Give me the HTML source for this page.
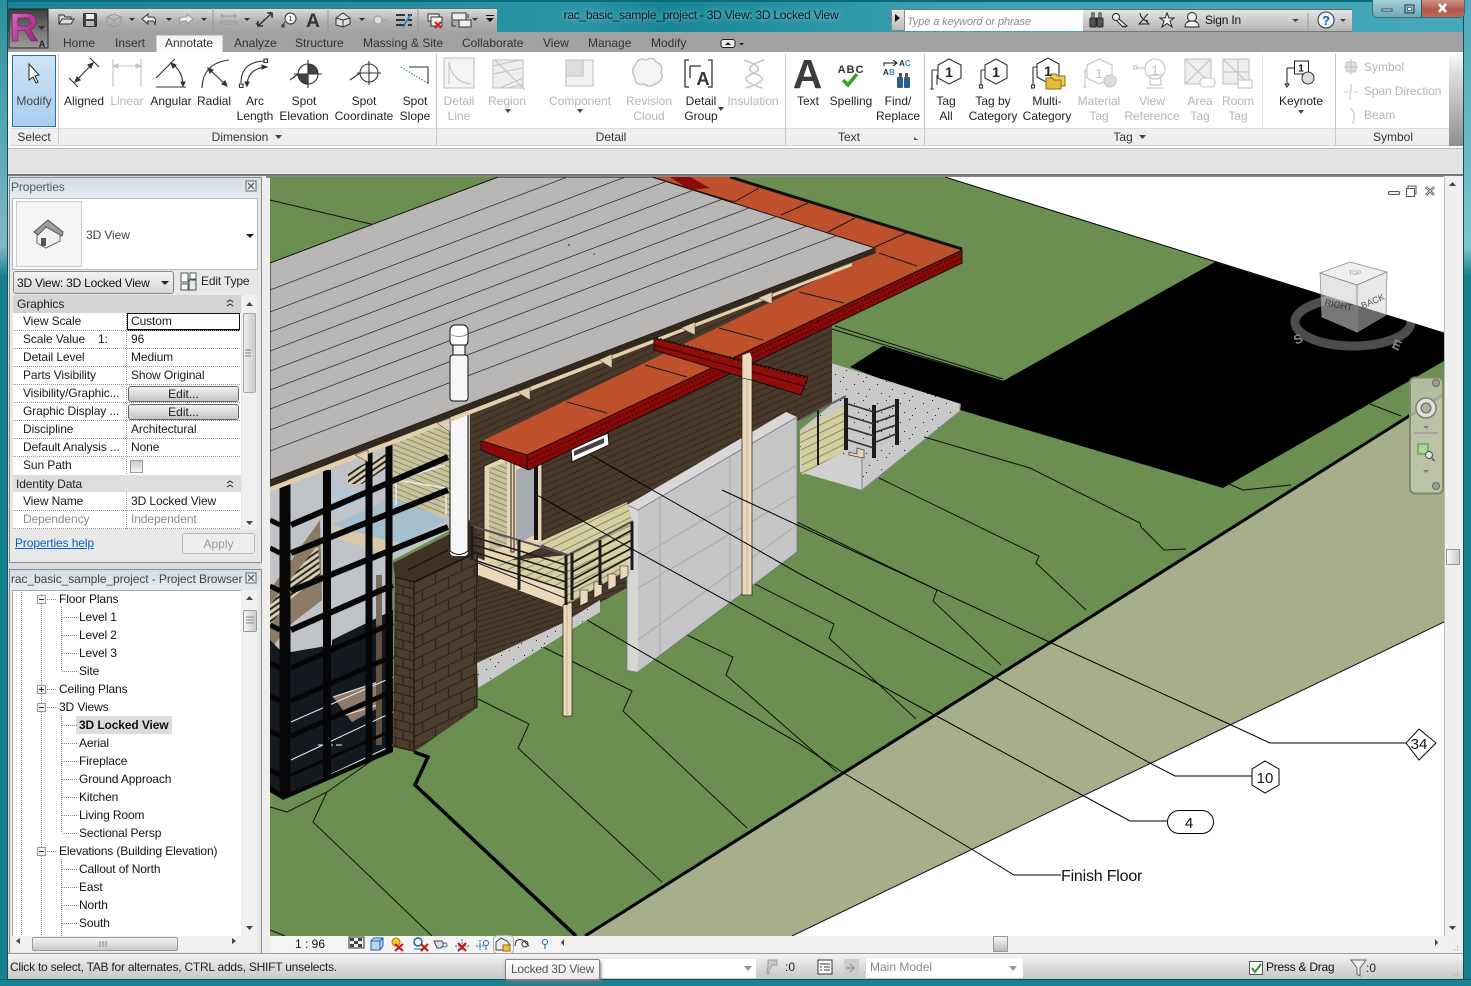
<!DOCTYPE html>
<html><head><meta charset="utf-8"><title>rac_basic_sample_project - 3D View: 3D Locked View</title>
<style>
html,body{margin:0;padding:0;width:1471px;height:986px;overflow:hidden;background:#1f8796}
*{box-sizing:border-box}
div,span,a{position:absolute;font:12px/15px "Liberation Sans",sans-serif;color:#222;white-space:nowrap}
svg{position:absolute;left:0;top:0;overflow:hidden}
svg text{font-family:"Liberation Sans",sans-serif}
.c{transform:translateX(-50%);text-align:center}
.g{color:#b5b5b5}
.tab{top:36px;color:#333}
.lb{top:130px;color:#333}
.row{left:23px;color:#1a1a1a;letter-spacing:-.1px}
.val{left:131px;color:#1a1a1a;letter-spacing:-.1px}
.tr{color:#111;letter-spacing:-.12px}
.edit{left:128px;width:111px;height:16px;background:linear-gradient(#f2f2f2,#c4c4c4);border:1px solid #666;border-radius:3px;text-align:center;line-height:14px}
</style></head><body>

<!-- window frame -->
<div style="left:0;top:0;width:1471px;height:33px;background:linear-gradient(90deg,#1a8596 0,#2a93a6 40%,#178494 45%,#3ca3b5 65%,#46a8ba 100%);border-top:2px solid #0a6a78"></div>
<div style="left:0;top:0;width:8px;height:986px;background:linear-gradient(#2a8f9f 0,#7fb9c4 25%,#17808e 28%,#17808e 100%);border-right:1px solid #0b4f58"></div>
<div style="left:1463px;top:0;width:8px;height:986px;background:linear-gradient(#4fa9ba 0,#7fc3ce 25%,#17808e 28%,#17808e 100%);border-left:1px solid #0b4f58"></div>
<div style="left:0;top:979px;width:1471px;height:7px;background:#1a8292;border-top:1px solid #0b4f58"></div>

<!-- QAT -->
<div style="left:48px;top:8px;width:449px;height:24px;background:linear-gradient(#dcdcdc,#b0b0b0 55%,#a4a4a4);border-top:1px solid #666"></div>
<!-- title -->
<div class="c" style="left:701px;top:8px;color:#101a20;letter-spacing:-.26px;text-shadow:0 0 6px #a8dde4">rac_basic_sample_project - 3D View: 3D Locked View</div>
<!-- search -->
<div style="left:891px;top:9px;width:192px;height:22px;background:#fff;border-top:1px solid #777"></div>
<div style="left:891px;top:9px;width:14px;height:22px;background:linear-gradient(#e8e8e8,#bbb);border:1px solid #888"></div>
<div style="left:907px;top:15px;font-style:italic;font-size:11px;letter-spacing:-.1px;color:#8a8a8a">Type a keyword or phrase</div>
<div style="left:1083px;top:9px;width:269px;height:23px;background:linear-gradient(#e4e4e4,#b4b4b4);border-top:1px solid #666;border-bottom:1px solid #777"></div>
<div style="left:1205px;top:13px;color:#111;letter-spacing:-.2px">Sign In</div>
<!-- win buttons -->
<div style="left:1372px;top:0;width:93px;height:18px;background:linear-gradient(#a6ced6,#6aa9b6);border:1px solid #3a6f7a;border-top:0;border-radius:0 0 5px 5px"></div>
<div style="left:1422px;top:0;width:42px;height:17px;background:linear-gradient(#cf9488,#b25a4c 55%,#bc6a5c);border-radius:0 0 5px 0"></div>

<!-- tabs -->
<div style="left:8px;top:32px;width:1455px;height:20px;background:#a1a1a1"></div>
<div style="left:156px;top:35px;width:67px;height:18px;background:linear-gradient(#f2f2f2,#fff);border:1px solid #d0d0d0;border-bottom:0"></div>
<div class="tab" style="left:63px">Home</div>
<div class="tab" style="left:115px">Insert</div>
<div class="tab" style="left:165px">Annotate</div>
<div class="tab" style="left:234px">Analyze</div>
<div class="tab" style="left:295px">Structure</div>
<div class="tab" style="left:363px">Massing &amp; Site</div>
<div class="tab" style="left:462px">Collaborate</div>
<div class="tab" style="left:543px">View</div>
<div class="tab" style="left:588px">Manage</div>
<div class="tab" style="left:651px">Modify</div>

<!-- ribbon -->
<div style="left:8px;top:52px;width:1455px;height:97px;background:#fff;border-bottom:1px solid #bbb"></div>
<div style="left:10px;top:128px;width:1439px;height:18px;background:#efefef;border-top:1px solid #ddd;border-bottom:1px solid #ccc"></div>
<div style="left:1449px;top:52px;width:14px;height:94px;background:linear-gradient(#fff,#e0e0e0 20%,#8f8f8f)"></div>
<div style="left:8px;top:149px;width:1455px;height:27px;background:#e4e4e4;border-bottom:2px solid #777"></div>
<div style="left:12px;top:55px;width:44px;height:72px;background:linear-gradient(#cfe3f6,#a9cdee);border:1px solid #2a6cb4"></div>

<!-- left column -->
<div style="left:8px;top:176px;width:262px;height:778px;background:#dcdcdc"></div>
<div style="left:9px;top:177px;width:253px;height:386px;background:#e8e8e8;border:1px solid #8d8d8d"></div>
<div style="left:10px;top:178px;width:251px;height:19px;background:linear-gradient(#d2dde6,#e4ebf0)"></div>
<div style="left:11px;top:180px;color:#5a5a5a;letter-spacing:-.1px">Properties</div>
<div style="left:12px;top:198px;width:246px;height:72px;background:#fff;border:1px solid #bbb"></div>
<div style="left:16px;top:201px;width:66px;height:66px;background:#f5f5f5;border:1px solid #ccc"></div>
<div style="left:86px;top:228px;color:#444;letter-spacing:-.1px">3D View</div>
<div style="left:13px;top:271px;width:161px;height:23px;background:linear-gradient(#f4f4f4,#d8d8d8);border:1px solid #888;border-radius:3px"></div>
<div style="left:17px;top:276px;color:#111;letter-spacing:-.22px">3D View: 3D Locked View</div>
<div style="left:201px;top:274px;color:#222;letter-spacing:-.15px">Edit Type</div>

<div style="left:13px;top:295px;width:228px;height:234px;background:#fff"></div>
<div style="left:13px;top:295px;width:228px;height:18px;background:#d4d4d4"></div>
<div style="left:13px;top:475px;width:228px;height:17px;background:#dedede"></div>
<div style="left:17px;top:297px;letter-spacing:-.1px">Graphics</div>
<div style="left:16px;top:477px;letter-spacing:-.1px">Identity Data</div>
<div class="row" style="top:314px">View Scale</div>
<div class="row" style="top:332px">Scale Value &nbsp;&nbsp;&nbsp;1:</div>
<div class="row" style="top:350px">Detail Level</div>
<div class="row" style="top:368px">Parts Visibility</div>
<div class="row" style="top:386px">Visibility/Graphic...</div>
<div class="row" style="top:404px">Graphic Display ...</div>
<div class="row" style="top:422px">Discipline</div>
<div class="row" style="top:440px">Default Analysis ...</div>
<div class="row" style="top:458px">Sun Path</div>
<div class="row" style="top:494px">View Name</div>
<div class="row" style="top:512px;color:#8c8c8c">Dependency</div>
<div style="left:127px;top:313px;width:113px;height:18px;background:#fff;border:1px solid #111;border-width:1px 1px 2px 1px"></div>
<div class="val" style="top:314px">Custom</div>
<div class="val" style="top:332px">96</div>
<div class="val" style="top:350px">Medium</div>
<div class="val" style="top:368px">Show Original</div>
<div class="edit" style="top:386px">Edit...</div>
<div class="edit" style="top:404px">Edit...</div>
<div class="val" style="top:422px">Architectural</div>
<div class="val" style="top:440px">None</div>
<div style="left:130px;top:460px;width:13px;height:13px;background:linear-gradient(#ccc,#f4f4f4);border:1px solid #999"></div>
<div class="val" style="top:494px">3D Locked View</div>
<div class="val" style="top:512px;color:#8c8c8c">Independent</div>
<div style="left:242px;top:295px;width:15px;height:234px;background:#f0f0f0"></div>
<div style="left:243px;top:313px;width:13px;height:80px;background:linear-gradient(90deg,#eee,#ccc);border:1px solid #aaa;border-radius:2px"></div>
<a style="left:15px;top:536px;color:#0a5fc8;text-decoration:underline;letter-spacing:-.12px">Properties help</a>
<div style="left:182px;top:533px;width:73px;height:21px;background:#eee;border:1px solid #bbb;border-radius:3px;text-align:center;line-height:21px;color:#999">Apply</div>

<!-- browser -->
<div style="left:9px;top:569px;width:253px;height:385px;background:#e8e8e8;border:1px solid #8d8d8d"></div>
<div style="left:10px;top:570px;width:251px;height:19px;background:linear-gradient(#d2dde6,#e4ebf0)"></div>
<div style="left:11px;top:572px;color:#444;letter-spacing:-.08px">rac_basic_sample_project - Project Browser</div>
<div style="left:12px;top:590px;width:229px;height:346px;background:#fff;border-left:1px solid #aaa;border-top:1px solid #aaa"></div>
<div style="left:241px;top:590px;width:17px;height:346px;background:#f0f0f0"></div>
<div style="left:243px;top:610px;width:14px;height:22px;background:linear-gradient(90deg,#f4f4f4,#ccc);border:1px solid #999;border-radius:2px"></div>
<div style="left:12px;top:936px;width:246px;height:16px;background:#f0f0f0"></div>
<div style="left:32px;top:937px;width:146px;height:14px;background:linear-gradient(#f4f4f4,#c8c8c8);border:1px solid #999;border-radius:2px"></div>
<div style="left:76px;top:716px;width:96px;height:18px;background:#dcdcdc"></div>
<div class="tr" style="left:59px;top:592px">Floor Plans</div>
<div class="tr" style="left:79px;top:610px">Level 1</div>
<div class="tr" style="left:79px;top:628px">Level 2</div>
<div class="tr" style="left:79px;top:646px">Level 3</div>
<div class="tr" style="left:79px;top:664px">Site</div>
<div class="tr" style="left:59px;top:682px">Ceiling Plans</div>
<div class="tr" style="left:59px;top:700px">3D Views</div>
<div class="tr" style="left:79px;top:718px;font-weight:bold">3D Locked View</div>
<div class="tr" style="left:79px;top:736px">Aerial</div>
<div class="tr" style="left:79px;top:754px">Fireplace</div>
<div class="tr" style="left:79px;top:772px">Ground Approach</div>
<div class="tr" style="left:79px;top:790px">Kitchen</div>
<div class="tr" style="left:79px;top:808px">Living Room</div>
<div class="tr" style="left:79px;top:826px">Sectional Persp</div>
<div class="tr" style="left:59px;top:844px">Elevations (Building Elevation)</div>
<div class="tr" style="left:79px;top:862px">Callout of North</div>
<div class="tr" style="left:79px;top:880px">East</div>
<div class="tr" style="left:79px;top:898px">North</div>
<div class="tr" style="left:79px;top:916px">South</div>

<!-- viewport scene -->
<div style="left:262px;top:176px;width:1201px;height:778px;background:#eee"></div>
<div style="left:266px;top:176px;width:1178px;height:2px;background:#888"></div>
<svg style="left:270px;top:177px" width="1174" height="759" viewBox="270 177 1174 759">
<defs>
<pattern id="sid" width="7" height="6" patternUnits="userSpaceOnUse" patternTransform="rotate(-24)"><rect width="7" height="6" fill="#48392a"/><rect y="5" width="7" height="1" fill="#33291d"/></pattern>
<pattern id="sid2" width="7" height="5" patternUnits="userSpaceOnUse" patternTransform="rotate(-17)"><rect width="7" height="5" fill="#48392a"/><rect y="4" width="7" height="1" fill="#33291d"/></pattern>
<pattern id="deck" width="7" height="7" patternUnits="userSpaceOnUse" patternTransform="rotate(-26)"><rect width="7" height="7" fill="#d4d0a2"/><rect y="6" width="7" height="1" fill="#8f8b68"/></pattern>
<pattern id="tanw" width="5" height="5" patternUnits="userSpaceOnUse" patternTransform="rotate(22)"><rect width="5" height="5" fill="#c9c39c"/><rect y="4" width="5" height="1" fill="#8d8a6c"/></pattern>
<pattern id="dots" width="23" height="19" patternUnits="userSpaceOnUse"><rect width="23" height="19" fill="#c9c9c9"/><rect x="3" y="4" width="1" height="1" fill="#222"/><rect x="12" y="1" width="1" height="1" fill="#222"/><rect x="18" y="9" width="1" height="1" fill="#222"/><rect x="7" y="13" width="1" height="1" fill="#222"/><rect x="15" y="16" width="1" height="1" fill="#222"/></pattern>
<pattern id="brR" width="26" height="22" patternUnits="userSpaceOnUse" patternTransform="matrix(1 -.48 0 1 0 0)"><rect width="26" height="22" fill="#4b3c2d"/><path d="M0 .5H26M0 11.5H26M6.5 0V11M19.5 11V22" stroke="#2a2016" fill="none"/></pattern>
<pattern id="brL" width="14" height="18" patternUnits="userSpaceOnUse" patternTransform="matrix(1 .27 0 1 0 0)"><rect width="14" height="18" fill="#4b3c2d"/><path d="M0 .5H14M0 9.5H14M4 0V9M11 9V18" stroke="#2a2016" fill="none"/></pattern>
<pattern id="hat" width="5" height="5" patternUnits="userSpaceOnUse" patternTransform="rotate(-35)"><rect width="5" height="5" fill="#d8cdb0"/><rect y="3" width="5" height="2" fill="#2c2a26"/></pattern>
<clipPath id="rf"><polygon points="270,263 498,177 652,177 875,248 270,480"/></clipPath>
</defs>
<rect x="270" y="177" width="1174" height="759" fill="#fff"/>
<polygon points="270,177 945,177 1444,333 1444,394 585,936 270,936" fill="#6a8f51"/>
<polygon points="585,936 1444,394 1444,622 792,936" fill="#a6ae8c"/>
<polygon points="883,346 1003,381 1215,262 1240,270 1444,333 1444,361 1223,488 960,410 850,367" fill="#000"/>
<path d="M792,936L1444,622" stroke="#111" fill="none"/>
<path d="M945,177L1444,333" stroke="#000" fill="none"/>
<polygon points="831,363 961,404 960,411 862,490 800,472 800,430 831,405" fill="url(#dots)"/>
<polygon points="800,450 862,458 862,490 800,472" fill="#d0d0d0"/>
<path d="M862,458V490L960,411V404" stroke="#888" fill="none"/>
<!-- contours -->
<g fill="none" stroke="#111" stroke-width="1">
<path d="M270,200L375,225"/>
<path d="M832,329L1003,381M835,326L1003,379"/>
<path d="M924,437L1030,468L1140,523L1141,527L1164,550L1186,549"/>
<path d="M879,478L1039,556L1036,563L1086,610"/>
<path d="M1229,484L1243,490L1291,485"/>
<path d="M1370,404L1401,416"/>
<path d="M797,522L937,590L933,601L1001,665"/>
<path d="M753,583L834,624L829,638L916,719"/>
<path d="M478,699L529,724L518,748L662,882"/>
<path d="M543,647L632,691L623,711L747,828"/>
<path d="M687,635L733,657L726,675L837,772"/>
<path d="M270,807L287,812L327,792L387,750"/>
<path d="M327,792L313,822L432,936"/>
<path d="M270,930L285,936"/>
</g>
<path d="M414,752L428,757L415,785L576,936" stroke="#000" stroke-width="3.5" fill="none"/>
<path d="M585,936L1444,394" stroke="#000" stroke-width="3" fill="none"/>

<!-- wall -->
<polygon points="468,400 832,240 832,403 600,525 477,590 468,600" fill="url(#sid)"/>
<!-- glass wall back -->
<polygon points="270,480 470,410 470,520 393,560 393,747 283,795 270,787" fill="#c0c4c9"/>
<polygon points="393,440 450,420 450,519 393,500" fill="url(#tanw)"/>
<polygon points="332,525 393,498 448,520 403,543 373,537" fill="#a6bfcc"/>
<polygon points="332,482 373,497 332,515" fill="#b4c9d5"/>
<polygon points="332,525 403,545 380,552 335,538" fill="#d8c9a8"/>
<path d="M396,505V480L446,488V515M396,480L445,465" stroke="#e8e8e8" stroke-width="1.5" fill="none"/>
<polygon points="270,590 320,520 322,600 290,625 270,650" fill="#8c7a64"/>
<polygon points="270,605 318,545 320,575 290,600 270,625" fill="url(#hat)"/>
<polygon points="348,472 392,450 392,464 362,484 348,484" fill="url(#hat)"/>
<polygon points="270,640 280,650 291,652 332,645 332,640 393,610 393,747 283,795 270,787" fill="#14181f"/>
<polygon points="333,697 380,682 378,708 352,722" fill="#8c7a6c"/>
<path d="M333,697L378,682M345,715L378,705" stroke="#eee" stroke-width="1" fill="none"/>
<path d="M379,625V745" stroke="#5f5040" stroke-width="6"/>
<path d="M379,575V625" stroke="#7b6b58" stroke-width="6"/>
<path d="M291,793L393,745M291,760L393,712M291,722L393,677" stroke="#e8e8e8" stroke-width="1" fill="none"/>
<path d="M318,745H345" stroke="#eee" stroke-dasharray="6 3" fill="none"/>
<!-- frame -->
<g stroke="#060606" fill="none">
<path d="M285,480V796" stroke-width="11"/>
<path d="M327,470V778" stroke-width="8"/>
<path d="M369,450V760" stroke-width="7"/>
<path d="M389,440V750" stroke-width="7"/>
<path d="M291,525L448,457M291,553L448,490M291,591L448,527M291,630L393,585" stroke-width="6"/>
<path d="M291,668L393,623M291,701L393,656M291,736L393,691" stroke-width="5"/>
<path d="M291,775L393,730" stroke-width="3"/>
<path d="M270,520L280,525M270,548L280,553M270,586L280,591M270,625L280,630M270,663L280,668M270,696L280,701M270,731L280,736M270,770L280,775" stroke-width="5"/>
</g>
<polygon points="270,785 283,795 393,747 393,752 283,800 270,792" fill="#060606"/>
<!-- brick pier -->
<polygon points="393,563 448,535 477,520 477,552 414,582 395,577" fill="#3f3124"/>
<path d="M408,570L448,550" stroke="#111"/>
<polygon points="395,577 414,582 414,752 393,747" fill="url(#brL)"/>
<polygon points="414,582 477,552 477,708 414,752" fill="url(#brR)"/>
<path d="M395,577L414,582L477,552M414,582V752M477,552V708" stroke="#111" fill="none"/>
<!-- lower wall + strip -->
<polygon points="477,583 600,525 632,520 632,585 563,623 477,663" fill="url(#sid2)"/>
<polygon points="477,663 563,623 600,600 600,612 478,688" fill="url(#dots)"/>
<!-- pipe lower -->
<rect x="450" y="400" width="18" height="156" fill="#f6f6f6" rx="4"/>
<path d="M450,400V551Q459,558 468,551V400" stroke="#111" fill="none"/>
<!-- door -->
<polygon points="484,466 542,440 542,548 484,572" fill="#e8d4b0" stroke="#222"/>
<polygon points="489,468 507,462 507,545 489,552" fill="url(#tanw)"/>
<rect x="511" y="462" width="3" height="90" fill="#e8d4b0" stroke="#222"/>
<polygon points="516,470 534,462 534,535 516,545" fill="#a7abb0"/>
<rect x="534" y="460" width="4" height="80" fill="#111"/>
<!-- window -->
<polygon points="571,449 608,433 609,445 572,462" fill="#fff" stroke="#111"/>
<polygon points="574,451 604,438 604,443 574,456" fill="#444"/>
<!-- concrete wall -->
<polygon points="638,510 797,417 797,552 638,672" fill="#c6c6c8"/>
<polygon points="627,505 638,510 638,672 627,670" fill="#d6d6d6"/>
<polygon points="627,505 786,412 797,417 638,510" fill="#d8d8d8"/>
<path d="M627,505L638,510L797,417V552L638,672H627V505" stroke="#777" fill="none" stroke-width=".8"/>
<path d="M660,497V655M730,456V603M638,558L797,465M638,588L797,495M638,640L797,525" stroke="#a8a8aa" fill="none"/>
<!-- balcony deck -->
<polygon points="537,543 627,502 632,520 570,555" fill="url(#deck)"/>
<polygon points="478,563 568,555 632,523 627,570 563,607 478,575" fill="url(#deck)"/>
<polygon points="478,558 568,592 563,607 478,575" fill="#ecd9bc"/>
<path d="M478,563L565,598" stroke="#222" fill="none"/>
<g fill="#ecd9bc" stroke="#222" stroke-width=".6"><path d="M580,590h8v12l-8,4z"/><path d="M594,582h8v12l-8,4z"/><path d="M608,574h8v12l-8,4z"/><path d="M620,566h8v10l-8,4z"/></g>
<polygon points="563,605 572,602 572,716 563,716" fill="#ecd9bc" stroke="#222" stroke-width=".7"/>
<path d="M567,605V716" stroke="#c8b28e" fill="none"/>
<!-- rails -->
<g fill="none" stroke="#1c1c1c">
<path d="M472,526L568,555L633,521" stroke="#555" stroke-width="2"/>
<path d="M472,526V560M519,540V590M566,555V605M572,553V600M600,540V585M632,522V570" stroke-width="3"/>
<path d="M474,537L566,565M474,545L566,573M474,552L566,582M474,560L566,590M572,563L632,530M572,572L632,540M572,580L632,548M572,589L632,556" stroke-width="1.600"/>
</g>
<!-- gray post -->
<rect x="742" y="353" width="10" height="242" fill="#ecd9bc" stroke="#222" stroke-width=".7"/>
<path d="M747,353V595" stroke="#c8b28e"/>
<!-- soffit & orange -->
<polygon points="482,441 852,263 962,249 527,455" fill="#be502b"/>
<polygon points="652,177 730,177 962,249 875,248" fill="#be502b"/>
<polygon points="875,248 962,249 852,263" fill="#be502b"/>
<g stroke="#1a1a1a" fill="none"><path d="M734,202L759,188M781,215L808,203M828,232L855,218M875,247L906,233M879,253L917,266M799,292L844,303M719,328L763,340M645,365L687,377M567,402L607,413"/><path d="M652,177L734,202"/></g>
<path d="M730,177L962,249" stroke="#111" stroke-width="3" fill="none"/>
<polygon points="670,177 690,177 710,188 690,190" fill="#8b0a0a"/>
<polygon points="962,250 962,263 529,470 482,450 481,441 527,455" fill="#8c0808"/>
<path d="M960,254L528,460M962,258L529,465" stroke="#111" stroke-dasharray="2 2" fill="none"/>
<path d="M482,441L527,455L962,250V263L529,470L481,450V441M527,455V470" stroke="#111" fill="none"/>
<!-- roof -->
<polygon points="270,263 498,177 652,177 875,248 270,480" fill="#b9b7b5" stroke="#111"/>
<g clip-path="url(#rf)" stroke="#333" stroke-width=".8" fill="none"><path d="M270,290L670,138M270,312L770,122M270,332L770,142M270,351L870,123M270,371L970,105M270,390L870,162M270,409L970,143M270,430L970,164M270,451L970,185"/></g>
<polygon points="270,480 875,248 876,253 270,487" fill="#332a1f"/>
<polygon points="270,487 852,263 852,266 270,492" fill="#e3cfae"/>
<g fill="#e3cfae" stroke="#333" stroke-width=".5"><path d="M758,298L772,292V304Z"/><path d="M681,328L695,322V335Z"/><path d="M599,360L612,354V368Z"/><path d="M517,392L530,387V400Z"/><path d="M437,423L450,418V432Z"/><path d="M355,455L368,450V462Z"/></g>
<circle cx="569" cy="245" r=".7" fill="#111"/><circle cx="594" cy="254" r=".7" fill="#111"/>
<!-- pipe upper -->
<rect x="450" y="325" width="18" height="21" rx="5" fill="#fff" stroke="#111"/>
<path d="M450,334Q459,339 468,334" stroke="#888" fill="none"/>
<rect x="453" y="345" width="12" height="12" fill="#f4f4f4" stroke="#111"/>
<rect x="450" y="355" width="18" height="46" rx="3" fill="#f6f6f6" stroke="#111"/>
<!-- beam -->
<polygon points="654,338 808,377 801,395 654,350" fill="#930c0c" stroke="#111"/>
<path d="M654,345L804,386" stroke="#4a0505" stroke-width="1.500"/>
<path d="M656,338L806,378" stroke="#111" stroke-dasharray="2 2" stroke-width="2"/>
<polygon points="742,355 750,352 752,357 752,380 742,378" fill="#ecd9bc" stroke="#222" stroke-width=".6"/>
<!-- pad railing -->
<polygon points="800,432 845,405 846,450 802,475" fill="url(#deck)"/>
<g fill="none" stroke="#1c1c1c">
<path d="M800,420L846,396" stroke="#666" stroke-width="2"/>
<path d="M846,398V450M874,405V458M897,399V445" stroke-width="4"/>
<path d="M848,404L874,412M848,416L874,424M848,428L874,436M848,440L874,448M876,412L896,405M876,422L896,415M876,432L896,425M876,442L896,434" stroke-width="1.700" stroke="#333"/>
<path d="M818,410V465" stroke-width="2"/>
</g>
<path d="M849,452l8,2v-6l7,2v8l-15,-3z" fill="#e5d2b0" stroke="#222" stroke-width=".6"/>
<!-- leaders -->
<g fill="none" stroke="#000">
<path d="M722,490L1045,640L1229,724L1270,743H1406"/>
<path d="M591,455L670,500L800,574L989,674L1148,762L1175,776H1252"/>
<path d="M537,495L632,549L800,641L931,713L1082,795L1130,821H1167"/>
<path d="M587,620L800,744L842,772L968,847L1014,875H1061"/>
</g>
<polygon points="1419,729 1436,743 1419,760 1406,743" fill="#fff" stroke="#000"/>
<text x="1419" y="749" font-size="15" text-anchor="middle" fill="#111">34</text>
<polygon points="1265,761 1279,769 1279,785 1265,793 1252,785 1252,769" fill="#fff" stroke="#000"/>
<text x="1265" y="783" font-size="15" text-anchor="middle" fill="#111">10</text>
<rect x="1167.500" y="810.500" width="46" height="23" rx="11.500" fill="#fff" stroke="#000"/>
<text x="1189" y="828" font-size="15" text-anchor="middle" fill="#111">4</text>
<text x="1061" y="881" font-size="16" fill="#111" letter-spacing="-.2">Finish Floor</text>
<!-- view controls -->
<rect x="1388.500" y="191.500" width="11" height="3" rx="1" fill="#eee" stroke="#555"/>
<rect x="1406.500" y="188.500" width="8" height="8" fill="#fff" stroke="#555"/>
<path d="M1408,188V186H1416V194H1414" stroke="#555" fill="none"/>
<path d="M1426,187L1434,195M1434,187L1426,195" stroke="#555" stroke-width="2.500"/>
<path d="M1426,187L1434,195M1434,187L1426,195" stroke="#eee" stroke-width=".8"/>
<!-- viewcube -->
<ellipse cx="1353" cy="322" rx="58" ry="24" fill="none" stroke="#fff" stroke-opacity=".3" stroke-width="9"/>
<polygon points="1320,273 1350,262 1387,272 1357,285" fill="#eee" fill-opacity=".95" stroke="#888" stroke-width=".7"/>
<polygon points="1320,273 1357,285 1357,332 1322,317" fill="#d1d1d1" fill-opacity=".57" stroke="#888" stroke-width=".7"/>
<polygon points="1357,285 1387,272 1386,315 1357,332" fill="#d1d1d1" fill-opacity=".5" stroke="#888" stroke-width=".7"/>
<text x="1338" y="308" font-size="9" fill="#333" transform="rotate(12 1338 308)" text-anchor="middle">RIGHT</text>
<text x="1374" y="304" font-size="9" fill="#555" transform="rotate(-24 1374 304)" text-anchor="middle">BACK</text>
<text x="1355" y="275" font-size="6" fill="#999" text-anchor="middle">TOP</text>
<text x="1300" y="343" font-size="13" font-weight="bold" fill="#888" transform="rotate(-25 1300 343)" text-anchor="middle">S</text>
<text x="1395" y="349" font-size="13" font-weight="bold" fill="#888" transform="rotate(25 1395 349)" text-anchor="middle">E</text>
<!-- nav bar -->
<rect x="1410" y="377.500" width="33" height="116" rx="5" fill="#bec5aa" fill-opacity=".85" stroke="#7e8a6a" stroke-width="2"/>
<circle cx="1426" cy="408" r="10" fill="#dfe3d4" stroke="#7e7e7e" stroke-width="1.500"/>
<circle cx="1426" cy="408" r="5" fill="#aab09c" stroke="#666"/>
<path d="M1414,433H1438" stroke="#8a9078"/>
<rect x="1418" y="444" width="10" height="10" fill="#b3d39d" stroke="#4e8a3e"/>
<circle cx="1429" cy="455" r="3.500" fill="#e2e2e2" stroke="#555"/><path d="M1431.500,458l3,3" stroke="#555" stroke-width="1.500"/>
<path d="M1423,426h6l-3,3zM1423,470h6l-3,3z" fill="#7a7a7a"/>
<circle cx="1436" cy="383" r="3.500" fill="#9aa08a" stroke="#666"/><circle cx="1436" cy="486" r="3.500" fill="#9aa08a" stroke="#666"/>
</svg>

<!-- scrollbars -->
<div style="left:1444px;top:177px;width:19px;height:777px;background:#efefef;border-left:1px solid #bbb"></div>
<div style="left:1446px;top:549px;width:14px;height:16px;background:linear-gradient(90deg,#f8f8f8,#ccc);border:1px solid #999"></div>
<div style="left:270px;top:936px;width:1175px;height:17px;background:#f0f0f0"></div>
<div style="left:270px;top:936px;width:290px;height:17px;background:#f4f4f4"></div>
<div style="left:993px;top:936px;width:15px;height:16px;background:linear-gradient(#f4f4f4,#bbb);border:1px solid #999"></div>
<div style="left:295px;top:937px;color:#111">1 : 96</div>

<!-- status -->
<div style="left:8px;top:953px;width:1455px;height:26px;background:linear-gradient(#f4f4f4,#dcdcdc 50%,#c8c8c8);border-top:1px solid #999"></div>
<div style="left:10px;top:960px;color:#222;letter-spacing:-.23px">Click to select, TAB for alternates, CTRL adds, SHIFT unselects.</div>
<div style="left:596px;top:959px;width:160px;height:19px;background:#fff"></div>
<div style="left:505px;top:959px;width:95px;height:21px;background:linear-gradient(#fff,#e8e8e8);border:1px solid #888;border-radius:2px;box-shadow:1px 2px 3px #777;text-align:center;line-height:19px;color:#555;letter-spacing:-.25px">Locked 3D View</div>
<div style="left:785px;top:960px">:0</div>
<div style="left:866px;top:958px;width:157px;height:20px;background:#fff"></div>
<div style="left:870px;top:960px;color:#888">Main Model</div>
<div style="left:1266px;top:960px;color:#111;letter-spacing:-.25px">Press &amp; Drag</div>
<div style="left:1366px;top:961px">:0</div>

<!-- ribbon text -->
<div class="c" style="left:34px;top:94px;color:#444">Modify</div>
<div class="c" style="left:84px;top:94px">Aligned</div>
<div class="c g" style="left:127px;top:94px">Linear</div>
<div class="c" style="left:171px;top:94px">Angular</div>
<div class="c" style="left:214px;top:94px">Radial</div>
<div class="c" style="left:255px;top:94px">Arc<br>Length</div>
<div class="c" style="left:304px;top:94px">Spot<br>Elevation</div>
<div class="c" style="left:364px;top:94px">Spot<br>Coordinate</div>
<div class="c" style="left:415px;top:94px">Spot<br>Slope</div>
<div class="c g" style="left:459px;top:94px">Detail<br>Line</div>
<div class="c g" style="left:507px;top:94px">Region</div>
<div class="c g" style="left:580px;top:94px">Component</div>
<div class="c g" style="left:649px;top:94px">Revision<br>Cloud</div>
<div class="c" style="left:701px;top:94px">Detail<br>Group</div>
<div class="c g" style="left:753px;top:94px">Insulation</div>
<div class="c" style="left:808px;top:94px">Text</div>
<div class="c" style="left:851px;top:94px">Spelling</div>
<div class="c" style="left:898px;top:94px">Find/<br>Replace</div>
<div class="c" style="left:946px;top:94px">Tag<br>All</div>
<div class="c" style="left:993px;top:94px">Tag by<br>Category</div>
<div class="c" style="left:1047px;top:94px">Multi-<br>Category</div>
<div class="c g" style="left:1099px;top:94px">Material<br>Tag</div>
<div class="c g" style="left:1152px;top:94px">View<br>Reference</div>
<div class="c g" style="left:1200px;top:94px">Area<br>Tag</div>
<div class="c g" style="left:1238px;top:94px">Room<br>Tag</div>
<div class="c" style="left:1301px;top:94px">Keynote</div>
<div class="g" style="left:1364px;top:60px">Symbol</div>
<div class="g" style="left:1364px;top:84px;letter-spacing:-.1px">Span Direction</div>
<div class="g" style="left:1364px;top:108px">Beam</div>
<div class="lb c" style="left:34px">Select</div>
<div class="lb c" style="left:240px">Dimension</div>
<div class="lb c" style="left:611px">Detail</div>
<div class="lb c" style="left:849px">Text</div>
<div class="lb c" style="left:1123px">Tag</div>
<div class="lb c" style="left:1393px">Symbol</div>

<!-- icons -->
<svg width="1471" height="986" viewBox="0 0 1471 986" style="pointer-events:none">
<defs><linearGradient id="rb" x1="0" y1="0" x2="0" y2="1"><stop offset="0" stop-color="#3d3d3d"/><stop offset=".6" stop-color="#7a7a7a"/><stop offset="1" stop-color="#9a9a9a"/></linearGradient>
<linearGradient id="rp" x1="0" y1="0" x2="1" y2="1"><stop offset="0" stop-color="#e080cc"/><stop offset=".5" stop-color="#b83c9c"/><stop offset="1" stop-color="#8a2478"/></linearGradient></defs>
<!-- app button -->
<rect x="9" y="9" width="39" height="39" fill="url(#rb)" stroke="#222"/>
<text x="24" y="41" font-size="40" font-weight="bold" fill="url(#rp)" stroke="#5a1a50" stroke-width=".5" text-anchor="middle">R</text>
<path d="M38,26h7l-3.500,4z" fill="#333"/>
<text x="42" y="47" font-size="9" font-weight="bold" fill="#222" text-anchor="middle">A</text>
<!-- QAT -->
<g fill="none" stroke="#333" stroke-width="1">
<path d="M59,24V15h5l1,2h6v3M59,24l3,-5h12l-3,5z" fill="#ddd"/>
<rect x="83.500" y="13.500" width="13" height="13" rx="1" fill="#444"/><rect x="86" y="14" width="8" height="5" fill="#eee" stroke="none"/><rect x="86" y="21" width="8" height="5" fill="#bbb" stroke="none"/>
<g stroke="#999"><path d="M107,17l7,-3l7,3v7l-7,3l-7,-3zM107,17l7,3l7,-3M114,20v7"/></g>
<path d="M148,14l-6,5l6,5v-3h4q3,0 3,4q2,-8 -3,-8h-4z" fill="#eee"/>
<path d="M187,14l6,5l-6,5v-3h-4q-3,0 -3,4q-2,-8 3,-8h4z" fill="#eee" stroke="#999"/>
<g stroke="#999"><rect x="221" y="21" width="15" height="3"/><path d="M221,16H236M223,14l-2,2l2,2M234,14l2,2l-2,2"/></g>
<path d="M258,26L272,13M256,23l3,3M270,12l3,3M258,21v5h5M267,13h5v5" stroke-width="1.500"/>
<circle cx="290.500" cy="18.500" r="5.500" fill="#f4f4f4"/><path d="M285,22l-2,3v1"/><rect x="282" y="25" width="2" height="2"/>
<path d="M343,13l-7,5v7l7,2l7,-3v-6z" fill="#ddd"/><path d="M336,18l7,2l7,-2M343,20v7"/>
<circle cx="378" cy="20" r="4" stroke="#999" fill="#ddd"/><path d="M383,20h4" stroke="#999"/>
</g>
<text x="313" y="27" font-size="19" font-weight="bold" fill="#333" text-anchor="middle">A</text>
<text x="290.500" y="21" font-size="7" fill="#222" text-anchor="middle">1</text>
<g stroke="#333" fill="none"><path d="M396,15h9M396,20h9M396,25h9M408,15h4M408,20h4M408,25h4" stroke-width="2"/><path d="M403,27L411,14" stroke="#1c78d8" stroke-width="1.500"/></g>
<g fill="none" stroke="#333"><rect x="428" y="14" width="11" height="7" fill="#eee"/><rect x="431" y="17" width="11" height="9" fill="#eee"/><rect x="452" y="13" width="14" height="7" fill="#eee"/><rect x="459" y="20" width="12" height="7" fill="#eee"/><path d="M452,21v5h4M468,14v4"/></g>
<path d="M435,22l6,6M441,22l-6,6" stroke="#d01818" stroke-width="2"/>
<path d="M129,18h6l-3,3zM166,18h6l-3,3zM201,18h6l-3,3zM244,18h6l-3,3zM359,18h6l-3,3zM472,18h6l-3,3z" fill="#333"/>
<path d="M486,15h8v1h-8zM486,18h8l-4,4z" fill="#111"/>
<path d="M418,8V32M328,8V32M213,8V32" stroke="#999"/>
<!-- search arrow -->
<path d="M895,14l5,4l-5,4z" fill="#111"/>
<!-- infocenter -->
<g fill="none" stroke="#222">
<rect x="1090" y="18" width="6" height="9" rx="1" fill="#555"/><rect x="1097" y="18" width="6" height="9" rx="1" fill="#555"/><path d="M1092,18v-5h2v5M1099,18v-5h2v5M1096,18h1"/>
<circle cx="1116" cy="17" r="3.500" fill="#eee"/><path d="M1119,19l8,7l-2,1l-1,-1l-1,1l-6,-6" fill="#eee"/>
<path d="M1139,24l10,0l-5,-5zM1140,13q1,7 8,8M1144,18l4,-4" stroke="#222"/>
<polygon points="1167,13 1169,18 1174,18 1170,21 1172,27 1167,23.500 1162,27 1164,21 1160,18 1165,18" fill="#eee"/>
<circle cx="1192" cy="17" r="4.500" fill="#eee"/><path d="M1185,27q0,-5 5,-6h4q5,1 5,6z" fill="#eee"/>
<path d="M1308,13V30" stroke="#999"/>
</g>
<path d="M1292,19h7l-3.500,3zM1340,19h6l-3,3z" fill="#444"/>
<circle cx="1326" cy="20" r="8" fill="#f5f5f5" stroke="#234"/>
<text x="1326" y="25" font-size="13" font-weight="bold" fill="#1a58c8" text-anchor="middle">?</text>
<!-- window btns -->
<path d="M1382,9h10v2h-10z" fill="#fff" stroke="#345"/><rect x="1405" y="5" width="9" height="8" fill="none" stroke="#234"/><rect x="1407.500" y="7.500" width="4" height="3" fill="#fff" stroke="#234" stroke-width=".6"/>
<path d="M1439,4l7,8M1446,4l-7,8" stroke="#fff" stroke-width="2.500"/>
<rect x="1421" y="0" width="1" height="17" fill="#355"/>
<!-- tab toggle -->
<rect x="721" y="39.500" width="14" height="8" rx="2.500" fill="#eee" stroke="#222"/><path d="M725,45l3,-3l3,3z" fill="#222"/><path d="M739,43h5l-2.500,2.500z" fill="#222"/>
<!-- modify cursor -->
<path d="M29,64V80L33,77L36,83L38,82L35,76L39,75Z" fill="#fff" stroke="#222"/>
<!-- dim icons -->
<g fill="none" stroke="#333" stroke-width="1.100">
<path d="M69,78L78,87M90,58L99,67M75,82L93,63"/><path d="M75,82l5,-2l-3,-3zM93,63l-5,2l3,3z" fill="#333"/>
<path d="M156,87H186M156,78L175,59M171,63Q183,71 183,86"/><path d="M171,63l2,5l3,-3zM183,86l-2,-4h4z" fill="#333"/>
<path d="M202,88Q203,63 229,60M208,68L227,86"/><path d="M208,68l5,2l-3,3zM227,86l-5,-2l3,-3z" fill="#333"/>
<path d="M241,83Q241,62 264,61M247,85Q248,68 267,67"/><path d="M267,67l-5,-2v4zM247,86l-2,-4h4z" fill="#333"/>
<rect x="264" y="59" width="3.500" height="3.500" fill="#fff"/><rect x="239.500" y="84" width="3.500" height="3.500" fill="#fff"/>
<circle cx="308" cy="74" r="10"/><path d="M308,74V64A10,10 0 0 1 318,74ZM308,74V84A10,10 0 0 1 298,74Z" fill="#444"/><path d="M308,60V88M294,74H322M290,80L298,74"/>
<circle cx="369" cy="73" r="9"/><path d="M369,61V85M357,73H381M350,80L360,73"/>
<path d="M409,67H428V84"/>
</g>
<path d="M401,67L429,84" stroke="#2a62b0" stroke-dasharray="1.500 1.500" fill="none"/>
<g fill="none" stroke="#c4c4c4" stroke-width="1.100">
<path d="M113,59V87M141,59V87M113,66H141"/><path d="M113,66l5,-2v4zM141,66l-5,-2v4z" fill="#c4c4c4"/>
<rect x="444" y="58" width="30" height="30" fill="#f4f4f4"/><path d="M449,62V84M449,62Q452,82 471,84"/>
<rect x="493" y="60" width="30" height="28" fill="#eee"/><path d="M493,66L520,60M493,74L523,68M500,88L523,78M508,88L523,84M495,60L525,90"/>
<rect x="566" y="60" width="27" height="26" fill="#f2f2f2"/><rect x="566" y="60" width="17" height="16" fill="#ddd"/>
<path d="M636,64q3,-7 10,-4q7,-4 10,2q8,3 5,10q4,8 -6,12q-6,4 -11,0q-9,2 -9,-6q-5,-8 1,-14z" fill="#f4f4f4" stroke-width="1.500"/>
<path d="M744,60Q768,68 752,74Q736,80 762,88M764,60Q740,68 756,74Q772,80 746,88" stroke-width="1.500"/>
<path d="M1085,70V85M1085,70H1102V60M1085,85l-1,2h3"/>
<polygon points="1099,59 1112,65 1112,78 1099,84 1087,78 1087,65" fill="#fff"/><circle cx="1110" cy="81" r="6" fill="#ddd"/>
<circle cx="1155" cy="69" r="10" fill="#fff"/><path d="M1137,68h8"/><rect x="1134" y="66" width="3" height="3"/><rect x="1150" y="75" width="11" height="10"/><path d="M1146,88h17"/>
<rect x="1185" y="59" width="26" height="25" fill="#eee"/><path d="M1185,59L1211,84M1211,59L1185,84"/><rect x="1200" y="78" width="15" height="9" rx="4" fill="#fff"/>
<rect x="1223" y="59" width="26" height="25" fill="#eee"/><path d="M1223,59L1249,84M1238,59V84M1223,72H1249"/><rect x="1238" y="80" width="14" height="8" fill="#fff"/>
<rect x="1346" y="62" width="10" height="10" rx="2" fill="#ddd"/><path d="M1351,59V75M1344,67H1358"/>
<path d="M1344,92h4M1354,92h4M1351,84v7l-1,2v7"/>
<path d="M1351,108l3,5v6l-1,3v2"/>
</g>
<text x="1099" y="78" font-size="13" fill="#c4c4c4" text-anchor="middle">1</text>
<text x="1155" y="75" font-size="14" fill="#c4c4c4" text-anchor="middle">1</text>
<path d="M505,109h6l-3,4zM577,109h6l-3,4zM718,107h6l-3,4zM275,135h7l-3.500,4zM1139,135h7l-3.500,4zM1298,110h6l-3,4z" fill="#444"/>
<path d="M914,137l4,3h-4zM915,135l3,3" fill="#555"/>
<!-- detail group -->
<g fill="none" stroke="#333" stroke-width="1.300"><path d="M689,60H685V87H689M708,60H712V87H708"/><path d="M690,66H701M690,66V78"/></g>
<text x="703" y="85" font-size="18" font-weight="bold" fill="#333" text-anchor="middle">A</text>
<!-- Text -->
<text x="807.500" y="88" font-size="41" font-weight="bold" fill="#3c3c3c" text-anchor="middle">A</text>
<text x="851" y="73" font-size="11" font-weight="bold" fill="#333" text-anchor="middle" letter-spacing="1">ABC</text>
<path d="M843,80l5,5l9,-11" stroke="#3f9e2a" stroke-width="3.500" fill="none"/>
<path d="M884,66V63H896M893,60l4,3l-4,3" stroke="#111" fill="none"/>
<text x="899" y="66" font-size="8" font-weight="bold" fill="#333">A</text><text x="905" y="66" font-size="8" font-weight="bold" fill="#3a86d8">C</text>
<text x="883" y="75" font-size="8" font-weight="bold" fill="#333">A</text><text x="889" y="75" font-size="8" font-weight="bold" fill="#3a86d8">B</text>
<rect x="897" y="77" width="6" height="11" rx="1" fill="#2a5f90"/><rect x="904" y="77" width="6" height="11" rx="1" fill="#2a5f90"/><rect x="899" y="73" width="3" height="5" fill="#555"/><rect x="905" y="73" width="3" height="5" fill="#555"/>
<!-- Tags -->
<g fill="#fff" stroke="#333" stroke-width="1.100">
<path d="M932,70H942M932,70V87M937,75H944M937,75V85M932,87l-1,2h3" fill="none"/>
<polygon points="949,59 961,65 961,78 949,84 938,78 938,65"/>
<path d="M981,70V85M981,70H987" fill="none"/><rect x="979.500" y="85" width="3" height="3"/>
<polygon points="996,59 1007,65 1007,78 996,84 985,78 985,65"/>
<path d="M1033,67H1040M1033,67V85" fill="none"/><rect x="1031.500" y="85" width="3" height="3"/>
<polygon points="1048,58 1059,64 1059,77 1048,83 1037,77 1037,64"/>
</g>
<path d="M1046,78h6l2,2h7v9h-15z" fill="#e6bb38" stroke="#8a6a10"/><path d="M1051,74h5l2,2h7v10h-4v-6h-7l-2,-2h-1z" fill="#f0cc55" stroke="#8a6a10"/>
<text x="949" y="77" font-size="14" font-weight="bold" fill="#222" text-anchor="middle">1</text>
<text x="996" y="77" font-size="14" font-weight="bold" fill="#222" text-anchor="middle">1</text>
<text x="1048" y="76" font-size="14" font-weight="bold" fill="#222" text-anchor="middle">1</text>
<!-- keynote -->
<path d="M1287,68H1294M1287,68V84M1285,84h4l-2,3z" fill="none" stroke="#222"/>
<rect x="1294.500" y="61" width="14" height="13" fill="#fff" stroke="#222"/>
<text x="1301" y="71.500" font-size="10" font-weight="bold" fill="#111" text-anchor="middle">1</text>
<circle cx="1308" cy="78" r="6" fill="#ddd" stroke="#333"/>
<!-- separators -->
<path d="M58.500,54V146M436.500,54V146M785.500,54V146M924.500,54V146M1335.500,54V146" stroke="#c8c8c8"/>
<path d="M1262.500,55V127" stroke="#ddd"/>
<!-- properties -->
<g fill="none" stroke="#666"><rect x="246" y="181" width="10" height="10" fill="#e8eef3"/><path d="M248,183l6,6M254,183l-6,6" stroke-width="1.500"/><rect x="246" y="573" width="10" height="10" fill="#e8eef3"/><path d="M248,575l6,6M254,575l-6,6" stroke-width="1.500"/></g>
<!-- house -->
<path d="M37,232V243L46,248L60,241V230L48,221Z" fill="#f2f2f2" stroke="#666"/><path d="M48,220L34,232L38,235L46,227L62,236L63,232Z" fill="#9c9c9c" stroke="#555"/><rect x="41" y="238" width="5" height="8" fill="#555"/>
<path d="M246,234h8l-4,4zM161,281h8l-4,4z" fill="#222"/>
<rect x="181" y="273" width="7" height="9" fill="#fff" stroke="#555"/><rect x="190" y="273" width="6" height="6" fill="#fff" stroke="#555"/><rect x="181" y="284" width="7" height="6" fill="#fff" stroke="#555"/><rect x="189" y="280" width="7" height="10" fill="#dfe7f0" stroke="#355"/>
<path d="M227,302l3,-2l3,2M227,306l3,-2l3,2M227,483l3,-2l3,2M227,487l3,-2l3,2" fill="none" stroke="#222"/>
<path d="M246,306h7l-3.500,-4zM246,521h7l-3.500,4zM246,600h7l-3.500,-4zM246,926h7l-3.500,4zM1449,186h7l-3.500,-4zM1449,926h7l-3.500,4zM20,944v-6l-4,3zM232,938v6l4,-3zM1435,939v7l3,-3.500zM564,939v7l-3,-3.500z" fill="#444"/>
<path d="M245,350h6M245,353h6M245,356h6M246,617h8M246,620h8M246,623h8M100,941v6M103,941v6M106,941v6" stroke="#888"/>
<!-- prop grid -->
<g stroke="#9a9a9a" stroke-dasharray="1 1" fill="none"><path d="M13,330.500H241M13,348.500H241M13,366.500H241M13,384.500H241M13,402.500H241M13,420.500H241M13,438.500H241M13,456.500H241M13,510.500H241M13,528.500H241M126.500,313V475M126.500,492V529"/></g>
<!-- tree -->
<g stroke="#888" stroke-dasharray="1 1" fill="none">
<path d="M21.500,590V936M41.500,594V936M61.500,607V671M61.500,715V833M61.500,859V936"/>
<path d="M47,599.500H57M47,689.500H57M47,707.500H57M47,851.500H57"/>
<path d="M62,617.500H77M62,635.500H77M62,653.500H77M62,671.500H77M62,725.500H77M62,743.500H77M62,761.500H77M62,779.500H77M62,797.500H77M62,815.500H77M62,833.500H77M62,869.500H77M62,887.500H77M62,905.500H77M62,923.500H77"/>
</g>
<g fill="#f4f4f4" stroke="#999"><rect x="37.500" y="595.500" width="8" height="8"/><rect x="37.500" y="685.500" width="8" height="8"/><rect x="37.500" y="703.500" width="8" height="8"/><rect x="37.500" y="847.500" width="8" height="8"/></g>
<path d="M39,599.500h5M39,689.500h5M41.500,687v5M39,707.500h5M39,851.500h5" stroke="#225"/>
<!-- view bar -->
<rect x="349" y="937" width="15" height="11" fill="#eee" stroke="#333"/><path d="M350,938h4v3h-4zM358,938h4v3h-4zM354,941h4v3h-4zM350,944h4v3h-4zM358,944h4v3h-4z" fill="#444"/>
<path d="M371,941h9v9h-9zM371,941l3,-3h9v8l-3,4M380,941l3,-3" fill="#bcd8ee" stroke="#1c62a8"/>
<circle cx="396" cy="942" r="4" fill="#f4c830" stroke="#b08000"/><path d="M395,944l8,7M403,944l-8,7" stroke="#d01010" stroke-width="2"/>
<circle cx="418" cy="942" r="4" fill="none" stroke="#1c62a8" stroke-width="1.500"/><path d="M421,944l7,7M428,944l-7,7" stroke="#d01010" stroke-width="2"/><path d="M414,949h8" stroke="#1c62a8"/>
<path d="M434,941h8l2,4l-3,3h-4z" fill="#ddd" stroke="#444"/><circle cx="445" cy="945" r="2" fill="#fff" stroke="#1c62a8"/>
<path d="M455,946h14M462,939v12" stroke="#1c62a8" stroke-dasharray="2 1"/><path d="M458,943l8,8M466,943l-8,8" stroke="#d01010" stroke-width="2"/>
<path d="M476,946h9M480,940v10" stroke="#1c62a8" stroke-dasharray="2 1"/><circle cx="486" cy="943" r="2.500" fill="#fff" stroke="#1c62a8"/><path d="M486,946v4" stroke="#1c62a8"/>
<path d="M496,950v-8l5,-4l6,3l3,4v5z" fill="#eee" stroke="#444"/><rect x="503" y="945" width="7" height="6" fill="#f0c030" stroke="#8a6a10"/>
<rect x="493.500" y="935.500" width="20" height="18" rx="4" fill="none" stroke="#aaa"/>
<path d="M516,941q4,-3 8,0l5,5M516,941l-1,5M522,944a3,3 0 1 0 6,0a3,3 0 1 0 -6,0" fill="none" stroke="#333"/>
<circle cx="545" cy="942" r="2.500" fill="#fff" stroke="#1c62a8"/><path d="M545,945v4" stroke="#1c62a8"/>
<!-- status -->
<path d="M744,966h8l-4,5zM1009,966h8l-4,5z" fill="#999"/>
<g fill="none" stroke="#999"><path d="M768,960h9v5h-5l-3,5v4h-2v-4l1,-3z" fill="#ccc"/></g>
<rect x="818" y="960" width="14" height="14" fill="#fff" stroke="#333"/><path d="M820,964h10M820,967h2M824,967h6M820,970h2M824,970h6" stroke="#333"/>
<rect x="844" y="959" width="15" height="16" fill="#ccc"/><path d="M846,968h7M850,964l4,4l-4,4" stroke="#888" fill="none"/>
<rect x="1249.500" y="961.500" width="13" height="13" fill="#fff" stroke="#555"/><path d="M1252,968l3,4l6,-8" stroke="#2e9a2e" stroke-width="2" fill="none"/>
<path d="M1351,960h15l-6,8v8l-3,-2v-6z" fill="#eee" stroke="#666"/>
<path d="M1457,950h1M1454,950h1M1457,947h1M1457,975h1M1454,975h1M1457,972h1" stroke="#999"/>
</svg>
</body></html>
